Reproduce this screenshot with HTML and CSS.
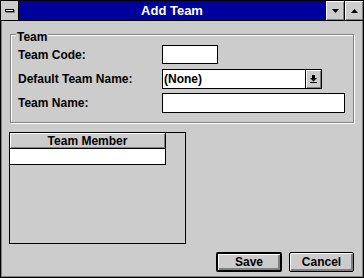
FILE: index.html
```html
<!DOCTYPE html>
<html>
<head>
<meta name="viewport" content="width=device-width, initial-scale=1">
<link rel="stylesheet" href="styles.css">
</head>
<body>
<div class="window">
  <!-- Title bar: system menu, caption, minimize and maximize -->
  <div class="titlebar">
    <div class="sysmenu"><span class="sysbar"></span></div>
    <div class="caption">Add Team</div>
    <div class="tbtn">
      <svg width="7" height="4" viewBox="0 0 7 4"><path d="M0 0h7L3.5 4z" fill="#000"/></svg>
    </div>
    <div class="tbtn">
      <svg width="7" height="4" viewBox="0 0 7 4"><path d="M0 4h7L3.5 0z" fill="#000"/></svg>
    </div>
  </div>

  <div class="client">
    <!-- Team group box -->
    <div class="group">
      <span class="legend">Team</span>
      <div class="row">
        <span class="label">Team Code:</span>
        <div class="field code"></div>
      </div>
      <div class="row">
        <span class="label">Default Team Name:</span>
        <div class="combo">
          <span class="combo-text">(None)</span>
          <span class="combo-btn">
            <svg width="7" height="8" viewBox="0 0 7 8">
              <path d="M2 0h3v3h2L3.5 6.5 0 3h2z" fill="#000"/>
              <rect x="0" y="7" width="7" height="1" fill="#000"/>
            </svg>
          </span>
        </div>
      </div>
      <div class="row">
        <span class="label">Team Name:</span>
        <div class="field name"></div>
      </div>
    </div>

    <!-- Team members list -->
    <div class="grid">
      <div class="grid-col">
        <div class="grid-head">Team Member</div>
        <div class="grid-row"></div>
      </div>
    </div>

    <div class="buttons">
      <button class="btn default">Save</button>
      <button class="btn">Cancel</button>
    </div>
  </div>
</div>
</body>
</html>
```

FILE: styles.css
```css
/* Whole dialog */
body {
  margin: 0;
  width: 364px;
  height: 278px;
  overflow: hidden;
  font-family: "Liberation Sans", Arial, sans-serif;
  font-weight: bold;
  font-size: 12px;
  color: #000;
}

.window {
  width: 364px;
  height: 278px;
  box-sizing: border-box;
  border: 1px solid #000;
  background: #cccccc;
  display: flex;
  flex-direction: column;
}

/* Title bar */
.titlebar {
  height: 19px;
  display: flex;
  border-bottom: 1px solid #000;
}

.sysmenu {
  width: 17px;
  border-right: 1px solid #000;
  background: #cccccc;
  display: flex;
  align-items: center;
  justify-content: center;
}

.sysbar {
  width: 7px;
  height: 1px;
  border: 1px solid #000;
  background: #fff;
  box-shadow: 1px 1px 0 #808080;
}

.caption {
  flex: 1;
  background: #00009c;
  color: #fff;
  font-size: 13px;
  line-height: 19px;
  text-align: center;
}

.tbtn {
  width: 18px;
  border-left: 1px solid #000;
  background: #cccccc;
  box-shadow: inset 1px 1px 0 #fff, inset -1px -1px 0 #808080;
  display: flex;
  align-items: center;
  justify-content: center;
}

/* Dialog body */
.client {
  flex: 1;
  display: flex;
  flex-direction: column;
  border: 1px solid #808080;
  border-top: none;
}

/* Etched group box */
.group {
  position: relative;
  width: 344px;
  box-sizing: border-box;
  margin: 13px 0 0 8px;
  padding: 10px 0 9px 7px;
  border: 1px solid #808080;
  box-shadow: inset 1px 1px 0 #fff, 1px 1px 0 #fff;
  display: flex;
  flex-direction: column;
  gap: 4px;
}

.legend {
  position: absolute;
  top: -4px;
  left: 5px;
  padding: 0 1px;
  line-height: 12px;
  background: #cccccc;
}

.row {
  display: flex;
  align-items: center;
}

.row:first-of-type {
  margin-bottom: 1px;
}

.label {
  width: 144px;
}

.field {
  height: 20px;
  box-sizing: border-box;
  border: 1px solid #000;
  background: #fff;
}

.code {
  width: 56px;
  height: 19px;
}

.name {
  width: 183px;
}

/* Drop-down list */
.combo {
  width: 160px;
  height: 20px;
  box-sizing: border-box;
  border: 1px solid #000;
  background: #fff;
  display: flex;
}

.combo-text {
  flex: 1;
  padding-left: 1px;
  line-height: 18px;
}

.combo-btn {
  width: 15px;
  border-left: 1px solid #000;
  background: #cccccc;
  box-shadow: inset 1px 1px 0 #fff, inset -1px -1px 0 #808080;
  display: flex;
  align-items: center;
  justify-content: center;
}

/* Team member list */
.grid {
  width: 177px;
  height: 112px;
  box-sizing: border-box;
  margin: 9px 0 0 7px;
  border: 1px solid #000;
}

.grid-col {
  width: 155px;
  border-right: 1px solid #000;
}

.grid-head {
  height: 15px;
  line-height: 16px;
  text-align: center;
  border-bottom: 1px solid #000;
  box-shadow: inset 1px 1px 0 #fff, inset -1px -1px 0 #808080;
}

.grid-row {
  height: 15px;
  background: #fff;
  border-bottom: 1px solid #000;
}

/* Save / Cancel */
.buttons {
  display: flex;
  justify-content: flex-end;
  gap: 7px;
  margin: 8px 8px 0 0;
}

.btn {
  width: 65px;
  height: 20px;
  padding: 0;
  border: 1px solid #000;
  border-radius: 2px;
  background: #cccccc;
  box-shadow: inset 1px 1px 0 #fff, inset -2px -2px 0 #808080;
  font-family: "Liberation Sans", Arial, sans-serif;
  font-weight: bold;
  font-size: 12px;
  color: #000;
}

.btn.default {
  width: 66px;
  border-width: 2px;
}
```
